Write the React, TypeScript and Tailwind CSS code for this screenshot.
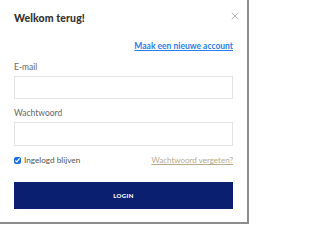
import React from 'react';
import { X } from 'lucide-react';

export default function App() {
  return (
    <div className="w-[249px] h-[224px] bg-[#8c8c8c] overflow-hidden" style={{ fontFamily: 'Lato, "Open Sans", "Liberation Sans", sans-serif' }}>
      <div className="w-[247px] h-[222px] bg-white flex flex-col px-[14px]">
        <div className="flex items-start justify-between pt-[11px]">
          <h1 className="text-[10.5px] leading-[14px] font-black text-[#333] tracking-[0.1px]">Welkom terug!</h1>
          <button className="text-[#8a8a8a] mr-[-8px] mt-[-1px]">
            <X size={12} strokeWidth={1.3} />
          </button>
        </div>

        <div className="flex justify-end mt-[16px]">
          <a href="#" className="text-[8.5px] leading-[10px] font-bold text-[#2b7de9] underline">Maak een nieuwe account</a>
        </div>

        <label className="text-[8.5px] leading-[10px] text-[#666] mt-[11px]">E-mail</label>
        <input type="text" className="mt-[4px] h-[23px] w-full border border-[#e3e3e3] outline-none" />

        <label className="text-[8.5px] leading-[10px] text-[#666] mt-[9px]">Wachtwoord</label>
        <input type="password" className="mt-[4px] h-[24px] w-full border border-[#e3e3e3] outline-none" />

        <div className="flex items-center justify-between mt-[9px]">
          <label className="flex items-center gap-[3px] text-[8.2px] leading-[10px] text-[#555]">
            <input type="checkbox" defaultChecked className="w-[7px] h-[7px] m-0 accent-[#1a6fe0]" />
            Ingelogd blijven
          </label>
          <a href="#" className="text-[8px] leading-[10px] text-[#b8a98a] underline">Wachtwoord vergeten?</a>
        </div>

        <button className="mt-[17px] h-[27px] w-full bg-[#0b1f70] text-white text-[6px] font-black tracking-[0.4px]">LOGIN</button>
      </div>
    </div>
  );
}
